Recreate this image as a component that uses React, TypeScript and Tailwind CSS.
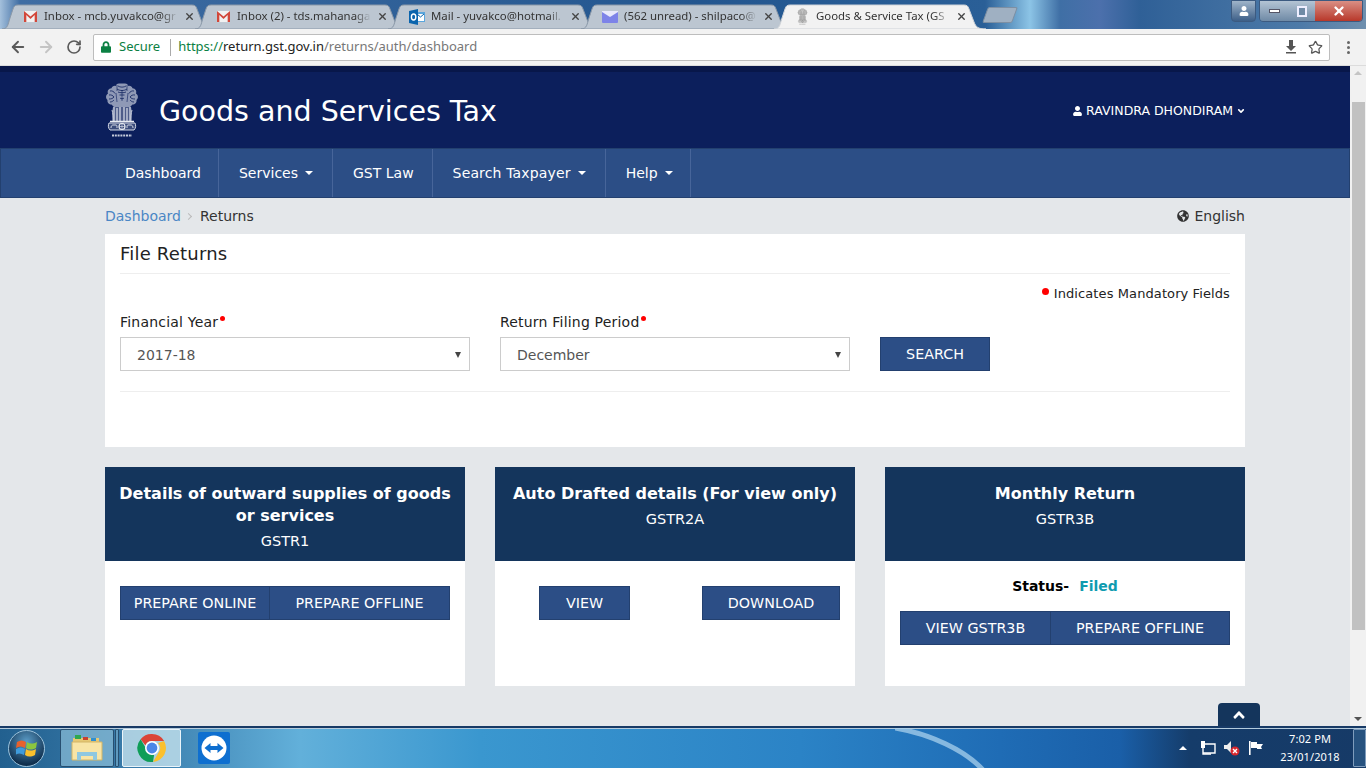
import { FC, ReactNode } from "react";
import { ArrowLeft, ArrowRight, RotateCw, Star, X } from "lucide-react";
import { FaAngleDown, FaAngleUp, FaGlobeAmericas, FaLock, FaUser } from "react-icons/fa";

const body = "font-['DejaVu_Sans',Verdana,sans-serif]";
const ui = "font-['Noto_Sans',sans-serif]";

const Emblem: FC<{ className?: string; color?: string; bg?: string }> = ({ className, color = "#e8ebf2", bg = "#0c1f5c" }) => (
  <svg viewBox="0 0 34 56" className={className} fill="none" stroke={color} strokeWidth="1">
    {/* lion heads */}
    <path d="M14 1.500c-2 0-3 1-3 2.500-2-.6-4 .3-4.500 2.200C3.500 6.500 2 9 3 11.500.5 13 .5 16.500 2.500 18 2 20.500 4 22.500 6.500 22.500L9 25h16l2.500-2.500c2.500 0 4.500-2 4-4.500 2-1.500 2-5-.5-6.500 1-2.500-.5-5-3.500-5.300C27 4.300 25 3.400 23 4c0-1.500-1-2.500-3-2.500z" fill={color} fillOpacity=".6" stroke="none" />
    <path d="M13 4c2 1.500 6 1.500 8 0M12 7c3 2 7 2 10 0M13 10c2 1 6 1 8 0M14.500 13h5M15 16c1 1 3 1 4 0" stroke={bg} strokeWidth=".8" />
    <path d="M5 9c2-.5 4 .5 5 2.500M4 13c2-.5 4 .5 5 2M4 17c2 0 4-.5 5-2M5 20c2 0 3-1 4-2" stroke={bg} strokeWidth=".8" />
    <path d="M29 9c-2-.5-4 .5-5 2.500M30 13c-2-.5-4 .5-5 2M30 17c-2 0-4-.5-5-2M29 20c-2 0-3-1-4-2" stroke={bg} strokeWidth=".8" />
    <path d="M12 3v6M22 3v6M11 11l1 9M23 11l-1 9M17 8v11" stroke={bg} strokeWidth=".6" />
    {/* chests and legs */}
    <path d="M8 25h18l1 3-1 11H8L7 28z" fill={color} fillOpacity=".3" stroke="none" />
    <path d="M9 25v14M12 26v13M15 25v14M19 25v14M22 26v13M25 25v14" strokeWidth="1.100" />
    <path d="M7 28c1 3 1 7 1 11M27 28c-1 3-1 7-1 11" strokeWidth=".8" />
    {/* abacus */}
    <path d="M5 39.500h24" strokeWidth="1.500" />
    <path d="M4 41c-1 2-1 5 1 7h24c2-2 2-5 1-7z" fill={color} fillOpacity=".22" strokeWidth=".9" />
    <circle cx="17" cy="44.500" r="3" strokeWidth="1.200" />
    <path d="M17 41.500v6M14 44.500h6" strokeWidth=".6" />
    <path d="M6 46c0-2 1-3 2-3h3c1 0 1 1 1 3M22 46c0-2 0-3 1-3h3c1 0 2 1 2 3" strokeWidth=".9" />
    {/* motto mark */}
    <path d="M7 53.500h20" strokeWidth="2" strokeDasharray="2 .8" strokeOpacity=".85" />
  </svg>
);

const GmailIcon = () => (
  <svg viewBox="0 0 16 14" className="w-[15px] h-[13px] shrink-0">
    <path d="M1 1h14v12H1z" fill="#f1f1f1" />
    <path d="M1 13V1l7 6 7-6v12h-2.500V5.500L8 9.600 3.500 5.500V13z" fill="#d2473a" />
  </svg>
);

const OutlookIcon = () => (
  <svg viewBox="0 0 16 16" className="w-4 h-4 shrink-0">
    <rect x="7" y="3" width="9" height="10" fill="#5ba6dc" />
    <path d="M8 5h7v7H8z" fill="#fff" />
    <path d="M8 5l3.500 3L15 5" stroke="#0a64ad" fill="none" />
    <path d="M0 2l9-2v16l-9-2z" fill="#0a64ad" />
    <ellipse cx="4.600" cy="8" rx="2.200" ry="3" fill="none" stroke="#fff" strokeWidth="1.400" />
  </svg>
);

const MailIcon = () => (
  <svg viewBox="0 0 16 14" className="w-4 h-[14px] shrink-0">
    <rect x="0" y="1" width="16" height="12" rx="1" fill="#7d83e8" />
    <path d="M0 2l8 5 8-5v-1H0z" fill="#e8e9fb" />
  </svg>
);

interface TabProps {
  icon: ReactNode;
  title: string;
  active?: boolean;
}

const Tab: FC<TabProps> = ({ icon, title, active }) => (
  <div className="relative w-[193px] h-[25px] flex items-center pl-[15px] pr-[6px] gap-[6px] shrink-0">
    <svg viewBox="0 0 212 25" className="absolute left-[-6px] top-0 w-[212px] h-[25px]">
      <path
        d="M0 25C6 25 6 20 8 14L11 5C12 2 13 1 16 1H190C193 1 194 2 195 5L200 18C202 23 204 25 212 25Z"
        fill={active ? "#f2f2f2" : "#bcc6d1"}
        stroke={active ? "#cfd3d8" : "#8a98a8"}
      />
    </svg>
    <span className="relative flex items-center">{icon}</span>
    <span className={`relative flex-1 mb-[2px] overflow-hidden whitespace-nowrap text-[11.4px] text-[#333] [mask-image:linear-gradient(to_right,black_88%,transparent)] ${ui}`}>
      {title}
    </span>
    <X className="relative w-[11px] h-[11px] text-[#444] shrink-0" strokeWidth={3} />
  </div>
);

const TitleBar = () => (
  <div className="relative h-[29px] bg-[linear-gradient(90deg,#a4c0dc_0px,#3f6da3_20px,#23568f_700px,#2a5f97_985px,#8cc4e6_1030px,#3f6fa5_1060px,#4c70ac_1100px,#2f6097_1140px,#4d7aa8_1300px,#6f8fae_1366px)] flex items-end overflow-hidden">
    <div className="flex pl-[8px] items-end">
      <Tab icon={<GmailIcon />} title="Inbox - mcb.yuvakco@gr" />
      <Tab icon={<GmailIcon />} title="Inbox (2) - tds.mahanaga" />
      <Tab icon={<OutlookIcon />} title="Mail - yuvakco@hotmail." />
      <Tab icon={<MailIcon />} title="(562 unread) - shilpaco@" />
      <Tab icon={<Emblem className="w-[15px] h-[17px]" color="#777" bg="#f2f2f2" />} title="Goods & Service Tax (GS" active />
    </div>
    <div className="w-[30px] h-[16px] ml-[12px] mb-[6px] bg-[#9fb0c2] border border-[#7d8fa3] rounded-[2px] -skew-x-[20deg]" />
    <div className="absolute right-[3px] top-0 flex gap-[3px]">
      <div className="w-[25px] h-[22px] rounded-b-[4px] border border-[#3c5a80] bg-[linear-gradient(#9fb4c9,#3d5f88)] flex items-center justify-center">
        <FaUser className="w-[10px] h-[10px] text-white" />
      </div>
      <div className="flex h-[22px] rounded-b-[4px] border border-[#3c5a80] overflow-hidden">
        <div className="w-[28px] bg-[linear-gradient(#b4c4d4,#6f8aa6)] flex items-center justify-center">
          <div className="w-[11px] h-[4px] bg-white border border-[#556]" />
        </div>
        <div className="w-[27px] bg-[linear-gradient(#b4c4d4,#6f8aa6)] flex items-center justify-center">
          <div className="w-[10px] h-[11px] border-2 border-[#eef] bg-[#6f8aa6]" />
        </div>
        <div className="w-[47px] bg-[linear-gradient(#d98f84,#b8382a)] flex items-center justify-center">
          <X className="w-[14px] h-[14px] text-white" strokeWidth={4} />
        </div>
      </div>
    </div>
  </div>
);

const Toolbar = () => (
  <div className="h-[37px] bg-[#f2f2f2] flex items-center pl-[9px] pr-[11px] border-b border-[#dcdcdc]">
    <ArrowLeft className="w-[18px] h-[18px] text-[#5a5a5a]" strokeWidth={2.5} />
    <ArrowRight className="w-[18px] h-[18px] ml-[10px] text-[#c4c4c4]" strokeWidth={2.5} />
    <RotateCw className="w-[16px] h-[16px] ml-[11px] text-[#5a5a5a]" strokeWidth={2.5} />
    <div className={`ml-[11px] flex-1 h-[27px] bg-white border border-[#bdbdbd] rounded-[2px] flex items-center pl-[7px] pr-[6px] text-[13px] ${ui}`}>
      <FaLock className="w-[10px] h-[12px] text-[#0b8043]" />
      <span className="ml-[8px] text-[#0b8043]">Secure</span>
      <span className="ml-[10px] w-px h-[17px] bg-[#aaa]" />
      <span className="ml-[7px]">
        <span className="text-[#0b8043]">https://</span>
        <span className="text-[#222]">return.gst.gov.in</span>
        <span className="text-[#777]">/returns/auth/dashboard</span>
      </span>
      <svg viewBox="0 0 12 14" className="ml-auto w-[12px] h-[14px]" fill="#555">
        <path d="M4 0h4v6h3L6 11 1 6h3zM1 12h10v1.600H1z" />
      </svg>
      <Star className="ml-[11px] w-[15px] h-[15px] text-[#555]" strokeWidth={2} />
    </div>
    <div className="ml-[17px] flex flex-col gap-[2px] pr-[5px]">
      <span className="w-[3px] h-[3px] rounded-full bg-[#666]" />
      <span className="w-[3px] h-[3px] rounded-full bg-[#666]" />
      <span className="w-[3px] h-[3px] rounded-full bg-[#666]" />
    </div>
  </div>
);

const navItems = [
  { label: "Dashboard", cls: "pr-[17px]" },
  { label: "Services", caret: true, cls: "pr-[19px]" },
  { label: "GST Law", cls: "pr-[18px]" },
  { label: "Search Taxpayer", caret: true, cls: "pr-[19px] tracking-[.15px]" },
  { label: "Help", caret: true, cls: "pr-[17px]" },
];

const Caret = () => (
  <span className="ml-[7px] inline-block align-middle border-x-[4px] border-x-transparent border-t-[4px] border-t-white" />
);

const Nav = () => (
  <nav className="h-[50px] bg-[#2c4e86] border-y border-[#23406f] border-x flex pl-[104px]">
    {navItems.map((item) => (
      <a key={item.label} className={`h-full flex items-center pl-[20px] border-r border-[#47659a] text-[14px] text-white whitespace-nowrap ${item.cls}`}>
        {item.label}
        {item.caret && <Caret />}
      </a>
    ))}
  </nav>
);

const Btn: FC<{ children: ReactNode; className?: string }> = ({ children, className = "" }) => (
  <button className={`h-[34px] pt-[1px] bg-[#2c4e86] border border-[#23406f] text-white text-[14.3px] uppercase whitespace-nowrap ${className}`}>
    {children}
  </button>
);

const SelectBox: FC<{ label: string; value: string }> = ({ label, value }) => (
  <div className="w-[350px]">
    <label className="block text-[14px] leading-[20px] text-[#222] tracking-[.2px]">
      {label}
      <span className="ml-[2px] inline-block w-[5px] h-[5px] mb-[6px] rounded-full bg-[#f00]" />
    </label>
    <div className="mt-[5px] h-[34px] border border-[#ccc] flex items-center pt-[2px] pl-[16px] pr-[8px] text-[14px] text-[#555]">
      {value}
      <span className="ml-auto border-x-[3.5px] border-x-transparent border-t-[6px] border-t-[#444]" />
    </div>
  </div>
);

const ReturnCard: FC<{ title: string; code: string; children: ReactNode }> = ({ title, code, children }) => (
  <section className="w-[360px] h-[219px] bg-white">
    <header className="h-[94px] bg-[#14355c] text-white text-center pt-[16px] px-[10px]">
      <h3 className="text-[16px] leading-[22px] font-bold">{title}</h3>
      <p className="text-[14.5px] leading-[18px] mt-[5px]">{code}</p>
    </header>
    {children}
  </section>
);

const Page = () => (
  <div className={`flex-1 flex flex-col bg-[#e4e7ea] ${body}`}>
    <header className="h-[82px] bg-[#0c1f5c] border-t-[6px] border-[#08174a] pl-[105px] pr-[104px] flex justify-between">
      <div className="flex items-start gap-[20px] pt-[10px]">
        <Emblem className="w-[34px] h-[56px]" />
        <h1 className="text-[28.5px] leading-[42px] mt-[9px] text-white">Goods and Services Tax</h1>
      </div>
      <div className="flex items-center h-[76px] pt-[2px] text-[12.5px] text-white">
        <FaUser className="w-[9px] h-[10px] mr-[4px]" />
        RAVINDRA DHONDIRAM
        <FaAngleDown className="ml-[3px] w-[10px] h-[10px]" />
      </div>
    </header>
    <Nav />
    <main className="mx-[105px] w-[1140px]">
      <div className="h-[36px] flex items-center text-[14px]">
        <a className="text-[#4a86c5]">Dashboard</a>
        <span className="ml-[5px] w-[5px] h-[5px] border-t border-r border-[#bbb] rotate-45" />
        <span className="ml-[9px] text-[#333]">Returns</span>
        <span className="ml-auto flex items-center text-[#333]">
          <FaGlobeAmericas className="w-[12px] h-[12px] mr-[5px]" />
          English
        </span>
      </div>
      <section className="h-[213px] bg-white px-[15px]">
        <h2 className="h-[40px] border-b border-[#eee] flex items-center text-[18px] tracking-[.2px] text-[#222]">File Returns</h2>
        <p className="mt-[10px] flex justify-end items-center text-[13px] tracking-[.1px] leading-[20px] text-[#222]">
          <span className="w-[7px] h-[7px] mb-[5px] mr-[5px] rounded-full bg-[#f00]" />
          Indicates Mandatory Fields
        </p>
        <div className="mt-[8px] flex gap-[30px] items-end pb-[20px] border-b border-[#eee]">
          <SelectBox label="Financial Year" value="2017-18" />
          <SelectBox label="Return Filing Period" value="December" />
          <Btn className="w-[110px]">Search</Btn>
        </div>
      </section>
      <div className="mt-[20px] flex justify-between">
        <ReturnCard title="Details of outward supplies of goods or services" code="GSTR1">
          <div className="flex px-[15px] pt-[25px]">
            <Btn className="w-[149px] border-r-0">Prepare Online</Btn>
            <Btn className="w-[181px]">Prepare Offline</Btn>
          </div>
        </ReturnCard>
        <ReturnCard title="Auto Drafted details (For view only)" code="GSTR2A">
          <div className="flex justify-between pl-[44px] pr-[15px] pt-[25px]">
            <Btn className="w-[91px]">View</Btn>
            <Btn className="w-[138px]">Download</Btn>
          </div>
        </ReturnCard>
        <ReturnCard title="Monthly Return" code="GSTR3B">
          <p className="h-[50px] flex items-center justify-center text-[14px] font-bold text-black">
            Status-
            <span className="ml-[10px] text-[#0f9bb0]">Filed</span>
          </p>
          <div className="flex px-[15px]">
            <Btn className="w-[150px] border-r-0">View GSTR3B</Btn>
            <Btn className="w-[180px]">Prepare Offline</Btn>
          </div>
        </ReturnCard>
      </div>
    </main>
  </div>
);

const Scrollbar = () => (
  <div className="relative w-[17px] bg-[#f1f1f1] flex flex-col items-center">
    <span className="mt-[5px] border-x-[4px] border-x-transparent border-b-[4px] border-b-[#c4c4c4]" />
    <div className="mt-[27px] w-[13px] h-[528px] bg-[#c1c1c1]" />
    <span className="mt-auto mb-[5px] border-x-[4px] border-x-transparent border-t-[4px] border-t-[#555]" />
  </div>
);

const WinOrb = () => (
  <div className="w-[37px] h-[37px] rounded-full border border-[#9cc3dc] bg-[radial-gradient(circle_at_50%_30%,#5a9bc6,#10304f_75%)] flex items-center justify-center">
    <svg viewBox="0 0 22 20" className="w-[22px] h-[20px]">
      <path d="M1 4c3-2 6-2 9 0l-1 6c-3-2-6-2-9 0z" fill="#e8612c" />
      <path d="M11 4c3 2 6 2 10 0l-1 6c-4 2-7 2-10 0z" fill="#8cc63f" />
      <path d="M0 11c3-2 6-2 9 0l-1 6c-3-2-6-2-9 0z" fill="#3f9bdc" />
      <path d="M10 11c3 2 6 2 10 0l-1 6c-4 2-7 2-10 0z" fill="#fbc02d" />
    </svg>
  </div>
);

const ChromeLogo = () => (
  <svg viewBox="0 0 30 30" className="w-[30px] h-[30px]">
    <path d="M15 1a14 14 0 0 1 12.100 7H15a7 7 0 0 0-6.500 4.400L3.600 6.200A14 14 0 0 1 15 1z" fill="#db4437" />
    <path d="M27.100 8A14 14 0 0 1 16 29l6-10.300A7 7 0 0 0 21 10z" fill="#fbc02d" />
    <path d="M16 29A14 14 0 0 1 3.600 6.200l6 10.300a7 7 0 0 0 7.500 5.400z" fill="#0f9d58" />
    <circle cx="15" cy="15" r="7" fill="#fff" />
    <circle cx="15" cy="15" r="5.400" fill="#4a86e8" />
  </svg>
);

const FolderIcon = () => (
  <svg viewBox="0 0 32 28" className="w-[32px] h-[28px]">
    <path d="M2 4h26v20H2z" fill="#e6c873" />
    <path d="M4 1h6v4H4z" fill="#2fa84f" />
    <path d="M12 3h5v3h-5z" fill="#c8402f" />
    <path d="M20 4h5v3h-5z" fill="#2f8fd0" />
    <path d="M1 8h30v18H1z" fill="#f8e5a6" stroke="#d2b566" />
    <path d="M6 18h20v8h-4v-4H10v4H6z" fill="#8fc8e0" />
  </svg>
);

const TeamViewerLogo = () => (
  <div className="w-[32px] h-[32px] rounded-[2px] bg-[#0e6fd0] flex items-center justify-center">
    <svg viewBox="0 0 26 26" className="w-[26px] h-[26px]">
      <circle cx="13" cy="13" r="12.500" fill="#fff" />
      <path d="M3.500 13l6-5v3h7V8l6 5-6 5v-3h-7v3z" fill="#0e6fd0" />
    </svg>
  </div>
);

const Taskbar = () => (
  <footer className={`relative h-[42px] border-t-[2px] border-[#173a66] flex items-center bg-[linear-gradient(90deg,#22608f_0px,#3c7fae_150px,#62b0da_300px,#3a97cf_480px,#2b83c6_800px,#1f6cb5_1000px,#1a5fa8_1120px,#153c6a_1190px,#163a67_1366px)] overflow-hidden ${ui}`}>
    <div className="absolute inset-x-0 top-0 h-px bg-[#b4cbdc]" />
    <svg viewBox="0 0 90 42" className="absolute left-[895px] top-0 w-[90px] h-[42px]" fill="none">
      <path d="M0 0C35 6 70 22 88 42" stroke="#a8d0ec" strokeWidth="5" strokeOpacity=".75" />
    </svg>
    <div className="relative ml-[8px]"><WinOrb /></div>
    <div className="relative ml-[15px] w-[54px] h-[38px] flex items-center justify-center rounded-[2px] border border-[#274f70] bg-[#9dcde2]/60"><FolderIcon /></div>
    <div className="relative ml-[1px] w-[4px] h-[38px] rounded-[1px] border border-[#274f70] bg-[#9dcde2]/40" />
    <div className="relative ml-[3px] w-[59px] h-[38px] flex items-center justify-center rounded-[2px] border border-[#eaf4fa] bg-[#c6e2ee]/80"><ChromeLogo /></div>
    <div className="relative ml-[17px]"><TeamViewerLogo /></div>
    <div className="relative ml-auto flex items-center text-white">
      <span className="border-x-[4px] border-x-transparent border-b-[4px] border-b-white" />
      <svg viewBox="0 0 16 16" className="ml-[13px] w-[16px] h-[16px]" fill="none" stroke="#fff" strokeWidth="1.400">
        <path d="M5 4h10v9H3" /><rect x="1" y="1" width="4" height="7" fill="#fff" stroke="none" /><path d="M3 8v6h8" />
      </svg>
      <svg viewBox="0 0 16 16" className="ml-[8px] w-[16px] h-[16px]">
        <path d="M0 5h3l4-4v12l-4-4H0z" fill="#eee" />
        <circle cx="11" cy="11" r="4.500" fill="#d8272d" />
        <path d="M9 9l4 4M13 9l-4 4" stroke="#fff" strokeWidth="1.400" />
      </svg>
      <svg viewBox="0 0 16 16" className="ml-[8px] w-[16px] h-[16px]" fill="#fff">
        <path d="M1 1h1.600v14H1zM3 2h6v6H3zM9 4h6l-2 3 1 2H9z" />
      </svg>
      <div className="ml-[14px] w-[64px] text-center text-[11px] tracking-[.1px] leading-[18px]">
        <p>7:02 PM</p>
        <p>23/01/2018</p>
      </div>
      <div className="ml-[11px] w-[13px] h-[38px] border border-[#7f9cbc] rounded-[1px] bg-[#27527f]" />
    </div>
  </footer>
);

export default function App() {
  return (
    <div className="relative h-screen w-full overflow-hidden flex flex-col">
      <TitleBar />
      <Toolbar />
      <div className="flex flex-1 min-h-0">
        <Page />
        <Scrollbar />
      </div>
      <Taskbar />
      <button className="absolute left-[1218px] top-[703px] w-[42px] h-[23px] rounded-t-[4px] bg-[#14355c] flex items-center justify-center">
        <FaAngleUp className="w-[18px] h-[18px] text-white" />
      </button>
    </div>
  );
}
